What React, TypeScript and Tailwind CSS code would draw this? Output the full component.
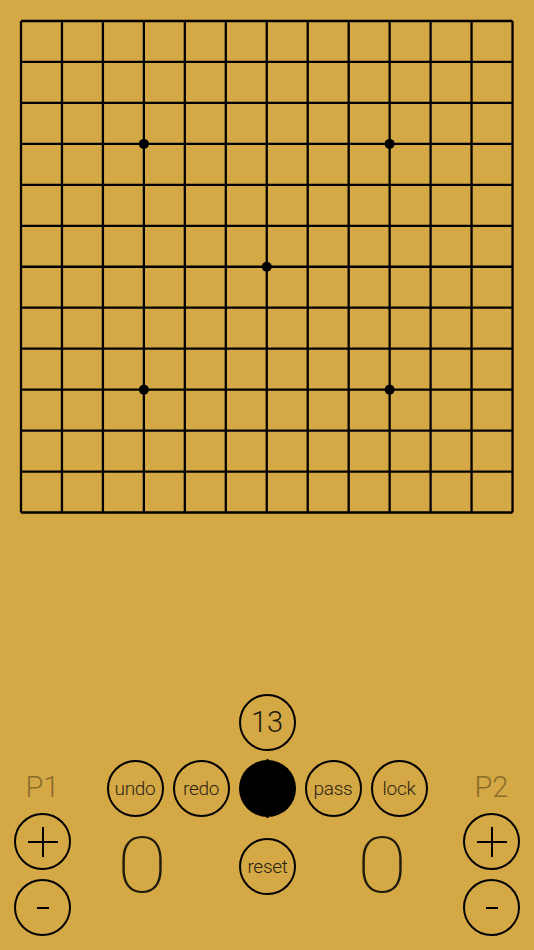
import React from "react";

const N = 13;
const start = 21;
const step = 40.96;
const end = start + step * (N - 1);
const stars = [
  [3, 3],
  [9, 3],
  [6, 6],
  [3, 9],
  [9, 9],
];

function Board() {
  const lines = [];
  for (let i = 0; i < N; i++) {
    const p = start + i * step;
    lines.push(<line key={"h" + i} x1={start} y1={p} x2={end} y2={p} stroke="#000" strokeWidth={2.3} />);
    lines.push(<line key={"v" + i} x1={p} y1={start} x2={p} y2={end} stroke="#000" strokeWidth={2.3} />);
  }
  return (
    <svg width={534} height={534} viewBox="0 0 534 534" className="block">
      {lines}
      {stars.map(([x, y], i) => (
        <circle key={i} cx={start + x * step} cy={start + y * step} r={5} fill="#000" />
      ))}
    </svg>
  );
}

function Circle({ children }: { children?: React.ReactNode }) {
  return (
    <div className="w-[57px] h-[57px] rounded-full border-2 border-black flex items-center justify-center shrink-0">
      {children}
    </div>
  );
}

function Label({ t }: { t: string }) {
  return <span className="text-[19px] font-light leading-none text-[#2b2410] tracking-[-0.3px]">{t}</span>;
}

function Stone() {
  return (
    <svg width={57} height={59} viewBox="0 0 57 59" className="block shrink-0 -my-[1px]">
      <circle cx={28.5} cy={29.5} r={28.5} fill="#000" />
      <rect x={27.5} y={0} width={2} height={3} fill="#000" />
      <rect x={27.5} y={56} width={2} height={3} fill="#000" />
      <rect x={0} y={28.5} width={2} height={2} fill="#000" />
      <rect x={55} y={28.5} width={2} height={2} fill="#000" />
    </svg>
  );
}

function PlusMinus() {
  return (
    <>
      <Circle>
        <div className="relative w-[30px] h-[30px]">
          <div className="absolute left-0 top-[14px] w-[30px] h-[2px] bg-black" />
          <div className="absolute top-0 left-[14px] h-[30px] w-[2px] bg-black" />
        </div>
      </Circle>
      <div className="h-[9px]" />
      <Circle>
        <div className="w-[12px] h-[2px] bg-black" />
      </Circle>
    </>
  );
}

function Side({ label }: { label: string }) {
  return (
    <div className="flex flex-col items-center w-[57px]">
      <div className="h-[78px]" />
      <div className="h-[30px] flex items-center justify-center text-[29px] font-light leading-none text-[#8a6d2c]">
        {label}
      </div>
      <div className="h-[11px]" />
      <PlusMinus />
    </div>
  );
}

function Score() {
  return (
    <div className="w-[70px] h-[57px] flex items-center justify-center">
      <span className="text-[77px] font-thin leading-none text-[#1e1a0c] inline-block scale-x-[1.2]">0</span>
    </div>
  );
}

export default function App() {
  return (
    <div
      className="w-[534px] h-[950px] bg-[#D5A846] overflow-hidden"
      style={{ fontFamily: "'Helvetica Neue', Roboto, 'Liberation Sans', sans-serif" }}
    >
      <Board />
      <div className="h-[160px]" />
      <div className="flex justify-between px-[14px]">
        <Side label="P1" />
        <div className="flex flex-col items-center w-[320px]">
          <Circle>
            <span className="text-[29px] font-light leading-none text-[#1e1a0c]">13</span>
          </Circle>
          <div className="h-[9px]" />
          <div className="flex gap-[9px] items-center">
            <Circle>
              <Label t="undo" />
            </Circle>
            <Circle>
              <Label t="redo" />
            </Circle>
            <Stone />
            <Circle>
              <Label t="pass" />
            </Circle>
            <Circle>
              <Label t="lock" />
            </Circle>
          </div>
          <div className="h-[21px]" />
          <div className="flex w-[320px] items-center">
            <Score />
            <div className="ml-[62px]">
              <Circle>
                <Label t="reset" />
              </Circle>
            </div>
            <div className="ml-[51px]">
              <Score />
            </div>
          </div>
        </div>
        <Side label="P2" />
      </div>
    </div>
  );
}
